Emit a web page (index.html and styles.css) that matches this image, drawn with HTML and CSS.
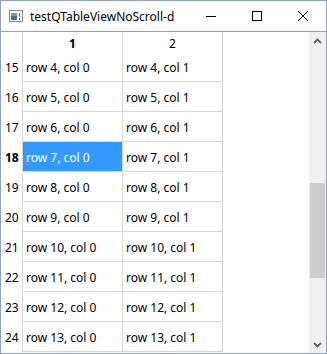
FILE: index.html
```html
<!DOCTYPE html>
<html>
<head>
<meta charset="utf-8">
<link rel="stylesheet" href="styles.css">
</head>
<body>
<div class="window">
  <div class="titlebar">
    <svg class="appicon" width="16" height="16" viewBox="0 0 16 16">
      <rect x="1.5" y="2.5" width="13" height="11" fill="#fff" stroke="#8a8a8a"/>
      <rect x="3" y="5" width="6" height="7" fill="#3f7a6a"/>
      <rect x="3" y="5" width="6" height="3" fill="#6fa596"/>
      <rect x="11" y="5" width="1" height="4" fill="#555"/>
      <rect x="11" y="10" width="1" height="2" fill="#555"/>
    </svg>
    <span class="title">testQTableViewNoScroll-d</span>
    <div class="caption-buttons">
      <div class="cbtn">
        <svg width="10" height="10" viewBox="0 0 10 10"><path d="M0 5.5H10" stroke="#000" stroke-width="1"/></svg>
      </div>
      <div class="cbtn">
        <svg width="10" height="10" viewBox="0 0 10 10"><rect x="0.5" y="0.5" width="9" height="9" fill="none" stroke="#000" stroke-width="1"/></svg>
      </div>
      <div class="cbtn">
        <svg width="10" height="10" viewBox="0 0 10 10"><path d="M0 0L10 10M10 0L0 10" stroke="#000" stroke-width="1"/></svg>
      </div>
    </div>
  </div>
  <div class="view">
    <div class="grid">
      <div class="corner"></div>
      <div class="hsec bold">1</div>
      <div class="hsec">2</div>
      <div class="hfill"></div>

      <div class="vsec">15</div><div class="cell">row 4, col 0</div><div class="cell">row 4, col 1</div><div class="fill"></div>
      <div class="vsec">16</div><div class="cell">row 5, col 0</div><div class="cell">row 5, col 1</div><div class="fill"></div>
      <div class="vsec">17</div><div class="cell">row 6, col 0</div><div class="cell">row 6, col 1</div><div class="fill"></div>
      <div class="vsec bold">18</div><div class="cell selected">row 7, col 0</div><div class="cell">row 7, col 1</div><div class="fill"></div>
      <div class="vsec">19</div><div class="cell">row 8, col 0</div><div class="cell">row 8, col 1</div><div class="fill"></div>
      <div class="vsec">20</div><div class="cell">row 9, col 0</div><div class="cell">row 9, col 1</div><div class="fill"></div>
      <div class="vsec">21</div><div class="cell">row 10, col 0</div><div class="cell">row 10, col 1</div><div class="fill"></div>
      <div class="vsec">22</div><div class="cell">row 11, col 0</div><div class="cell">row 11, col 1</div><div class="fill"></div>
      <div class="vsec">23</div><div class="cell">row 12, col 0</div><div class="cell">row 12, col 1</div><div class="fill"></div>
      <div class="vsec">24</div><div class="cell">row 13, col 0</div><div class="cell">row 13, col 1</div><div class="fill"></div>
    </div>
    <div class="scrollbar">
      <div class="arrow">
        <svg width="9" height="6" viewBox="0 0 9 6"><path d="M1 5L4.5 1.5L8 5" fill="none" stroke="#606060" stroke-width="1.8"/></svg>
      </div>
      <div class="track">
        <div class="thumb"></div>
      </div>
      <div class="arrow">
        <svg width="9" height="6" viewBox="0 0 9 6"><path d="M1 1L4.5 4.5L8 1" fill="none" stroke="#606060" stroke-width="1.8"/></svg>
      </div>
    </div>
  </div>
</div>
</body>
</html>
```

FILE: styles.css
```css
* { box-sizing: border-box; }
html, body { margin: 0; padding: 0; background: #fff; }
body {
  font-family: "Noto Sans", "Liberation Sans", sans-serif;
  font-size: 12px;
  color: #000;
}
.window {
  width: 327px;
  height: 354px;
  border: 1px solid #8ea3bd;
  display: flex;
  flex-direction: column;
  background: #fff;
  overflow: hidden;
}
.titlebar {
  height: 30px;
  display: flex;
  align-items: center;
  background: #fff;
  flex: none;
}
.appicon { margin-left: 7px; margin-right: 6px; flex: none; }
.title { font-size: 12px; flex: 1; white-space: nowrap; }
.caption-buttons { display: flex; height: 30px; }
.cbtn {
  width: 46px;
  height: 30px;
  display: flex;
  align-items: center;
  justify-content: center;
}
.cbtn svg { display: block; }
.view {
  flex: 1;
  display: flex;
  border-top: 1px solid #a0a0a0;
  min-height: 0;
}
.grid {
  flex: 1;
  display: grid;
  grid-template-columns: 22px 100px 100px 1fr;
  grid-template-rows: 20px repeat(10, 30px);
  align-content: start;
}
.corner { border-right: 1px solid #d8d8d8; }
.hsec {
  border-right: 1px solid #d8d8d8;
  display: flex;
  align-items: center;
  justify-content: center;
  padding-top: 2px;
}
.bold { font-weight: bold; }
.vsec {
  border-right: 1px solid #d8d8d8;
  display: flex;
  align-items: center;
  padding-left: 4px;
  padding-top: 1px;
}
.cell {
  border-right: 1px solid #d8d8d8;
  border-bottom: 1px solid #d8d8d8;
  display: flex;
  align-items: center;
  padding-left: 3px;
  padding-top: 1px;
  white-space: nowrap;
}
.cell.selected { background: #3399ff; color: #fff; }
.scrollbar {
  width: 17px;
  background: #f0f0f0;
  display: flex;
  flex-direction: column;
  flex: none;
}
.arrow {
  height: 17px;
  display: flex;
  align-items: center;
  justify-content: center;
  flex: none;
}
.track { flex: 1; padding: 0 1px; display: flex; flex-direction: column; }
.thumb {
  margin-top: 134px;
  height: 95px;
  background: #cdcdcd;
}
```
